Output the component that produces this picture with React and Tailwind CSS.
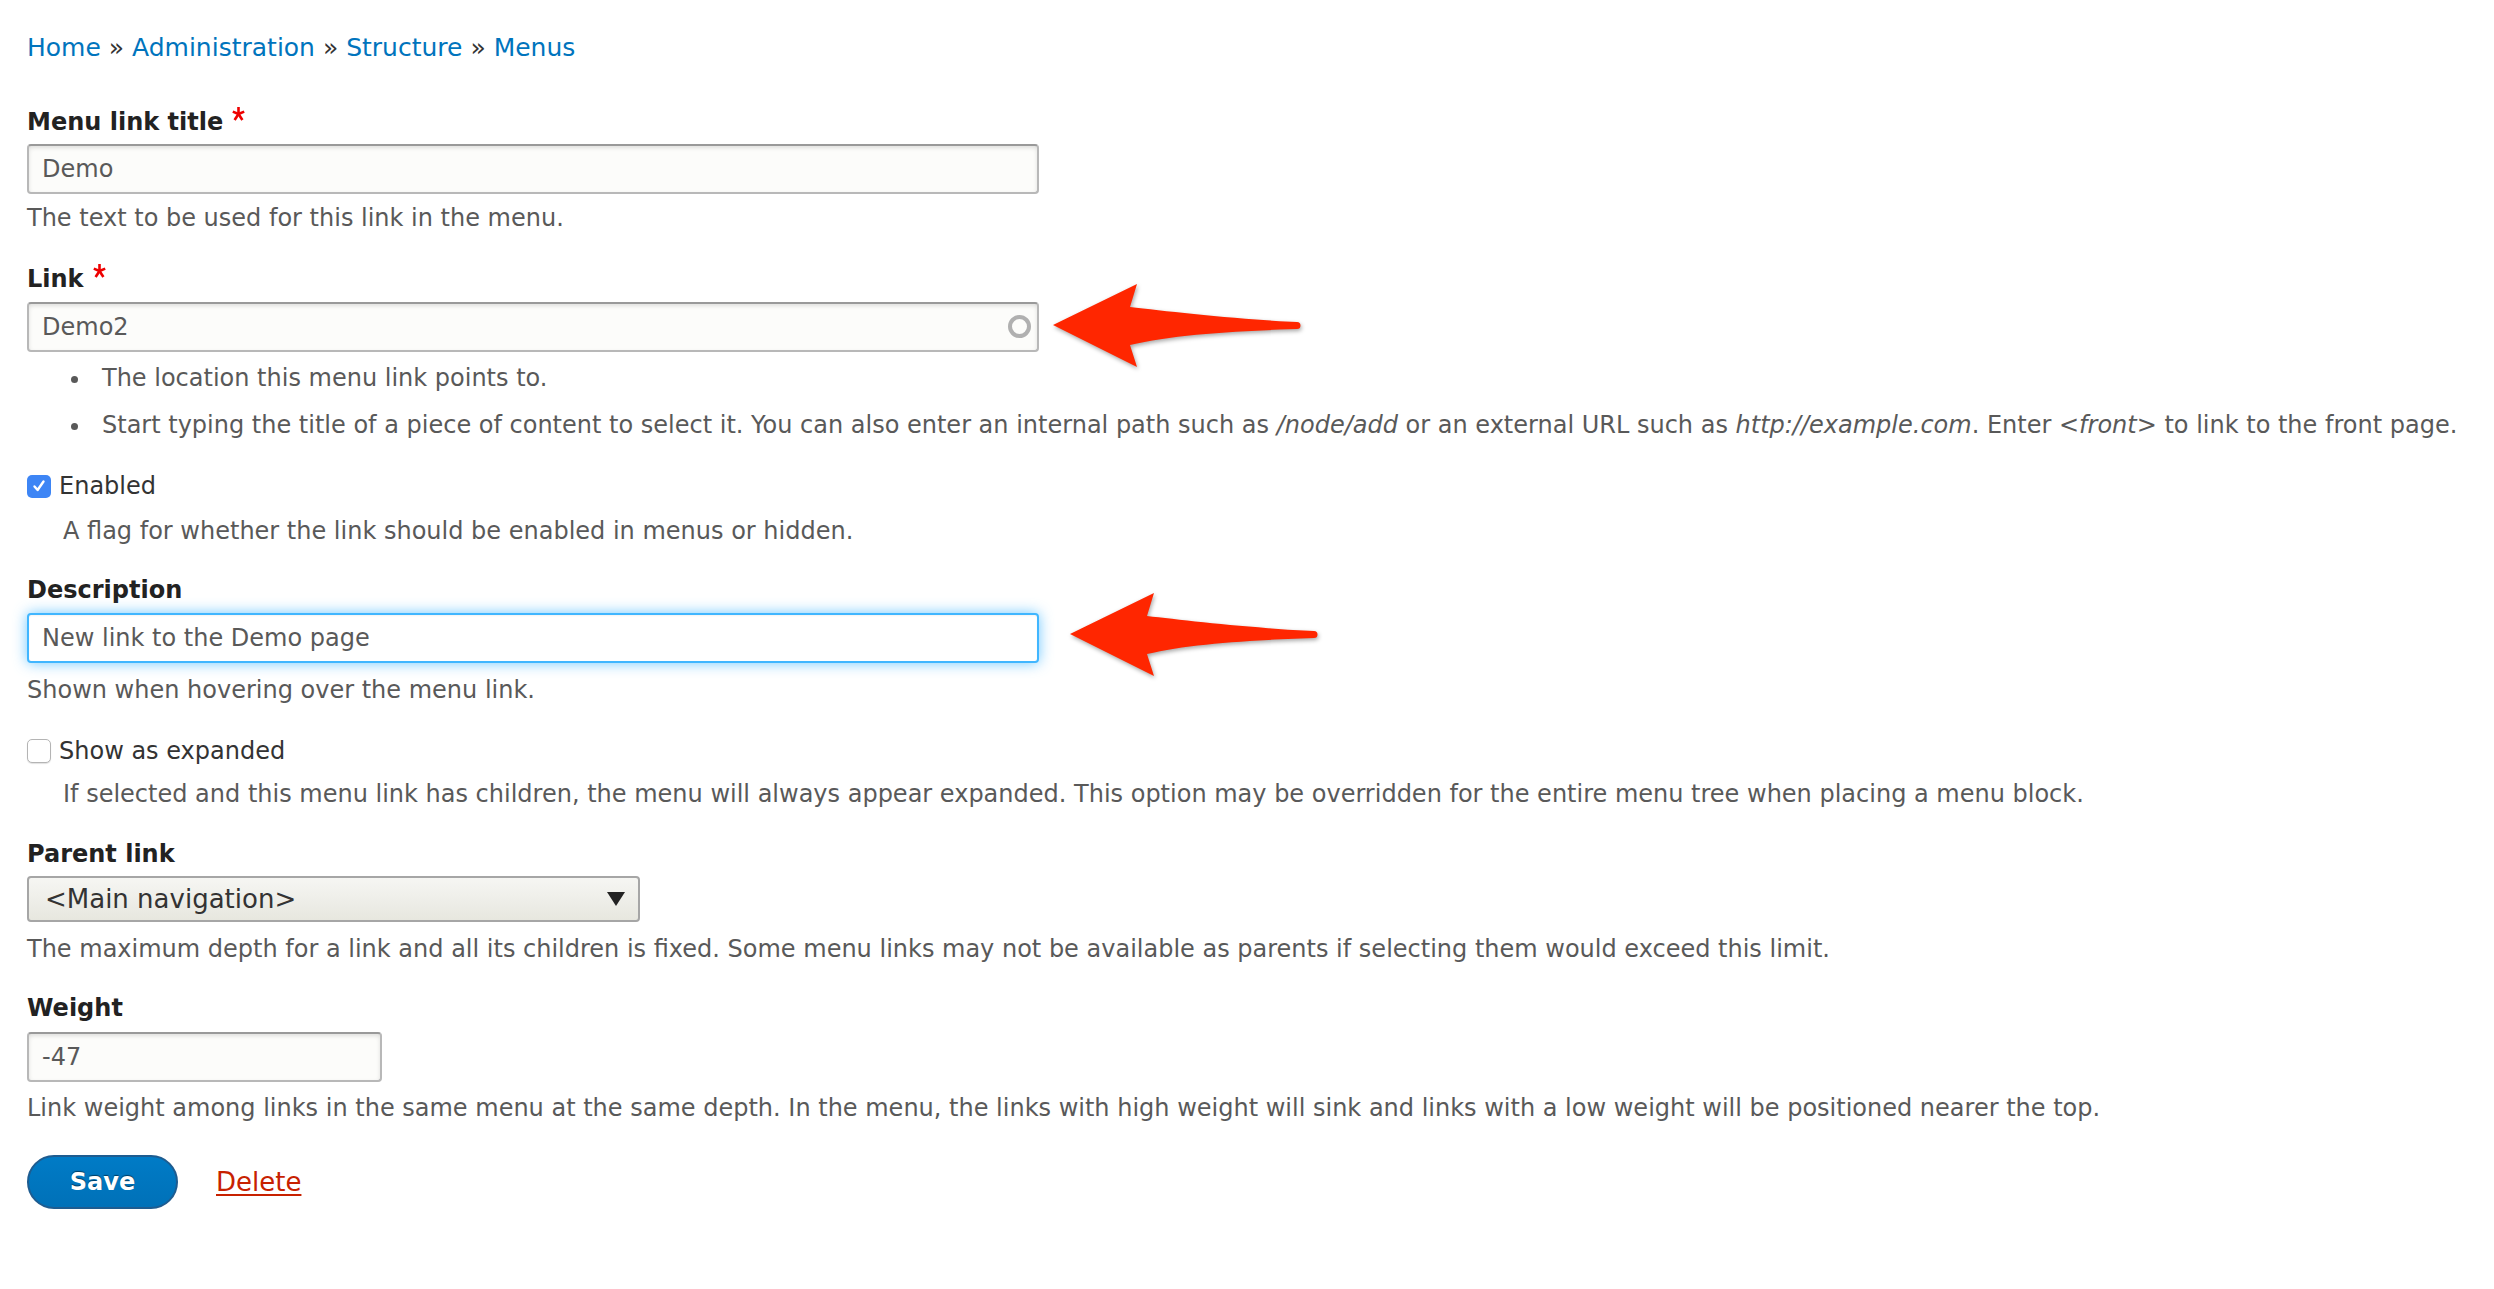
import React from 'react'

const inputBase =
  'h-[50px] w-full rounded-[4px] border-2 border-[#b8b8b8] border-t-[#999] bg-[#fcfcfa] px-[13px] text-[24px] text-[#595959] shadow-[inset_0_2px_4px_rgba(0,0,0,0.12)] outline-none'

function Required() {
  return (
    <svg className="ml-[9px] mt-[1px] h-[14px] w-[13px]" viewBox="0 0 13 14">
      <g stroke="#e00" strokeWidth="2.6" strokeLinecap="butt">
        <line x1="6.5" y1="0" x2="6.5" y2="7.5" />
        <line x1="6.5" y1="7" x2="0.8" y2="4.6" />
        <line x1="6.5" y1="7" x2="12.2" y2="4.6" />
        <line x1="6.5" y1="7" x2="2.6" y2="13" />
        <line x1="6.5" y1="7" x2="10.4" y2="13" />
      </g>
    </svg>
  )
}

function Label({ children, required, className = '' }) {
  return (
    <div className={`flex items-start leading-[32px] text-[24px] font-bold text-[#222] ${className}`}>
      <span>{children}</span>
      {required && <Required />}
    </div>
  )
}

function Desc({ children, className = '' }) {
  return <div className={`text-[24px] leading-[30px] text-[#595959] ${className}`}>{children}</div>
}

function Checkbox({ checked, label, className = '' }) {
  return (
    <div className={`flex items-center gap-[8px] leading-[32px] text-[24px] text-[#333] ${className}`}>
      {checked ? (
        <span className="flex h-[23px] w-[24px] items-center justify-center rounded-[5px] bg-[#3d85f5]">
          <svg className="h-[14px] w-[14px]" viewBox="0 0 14 14" fill="none">
            <path d="M2.5 7.5 L5.6 11 L11.5 2.5" stroke="#fff" strokeWidth="2.4" strokeLinecap="round" strokeLinejoin="round" />
          </svg>
        </span>
      ) : (
        <span className="h-[24px] w-[24px] rounded-[5px] border-[1.5px] border-[#b4b4b4] bg-white shadow-[0_1px_1px_rgba(0,0,0,0.12)]" />
      )}
      <span>{label}</span>
    </div>
  )
}

function Arrow({ className }) {
  return (
    <svg className={`absolute drop-shadow-[1px_2px_2px_rgba(0,0,0,0.35)] ${className}`} width="252" height="86" viewBox="0 0 252 86">
      <path
        d="M0 41 L84 0 L77 23 C112 27 180 35 244 38 A3.5 3.5 0 0 1 244 45 C180 47 118 51 77 61 L84 83 Z"
        fill="#ff2600"
      />
    </svg>
  )
}

export default function App() {
  return (
    <div className="relative min-h-screen bg-white pl-[27px] pt-[30px] font-['DejaVu_Sans',sans-serif]">
      <nav className="text-[25px] leading-[36px] text-[#333]">
        <a className="text-[#0074bd]">Home</a> » <a className="text-[#0074bd]">Administration</a> »{' '}
        <a className="text-[#0074bd]">Structure</a> » <a className="text-[#0074bd]">Menus</a>
      </nav>

      <Label required className="mt-[40px]">Menu link title</Label>
      <div className="mt-[6px] w-[1012px]">
        <input readOnly value="Demo" className={inputBase} />
      </div>
      <Desc className="mt-[9px]">The text to be used for this link in the menu.</Desc>

      <Label required className="mt-[30px]">Link</Label>
      <div className="relative mt-[7px] w-[1012px]">
        <input readOnly value="Demo2" className={inputBase} />
        <span className="absolute right-[8px] top-[13px] h-[23px] w-[23px] rounded-full border-[4px] border-[#b0b0b0] blur-[0.4px]" />
      </div>
      <ul className="mt-[11px] text-[24px] leading-[30px] text-[#595959]">
        <li className="flex items-center pl-[44px]">
          <span className="mt-[3px] mr-[24px] h-[7px] w-[7px] shrink-0 rounded-full bg-[#595959]" />
          The location this menu link points to.
        </li>
        <li className="mt-[17px] flex items-center whitespace-nowrap pl-[44px]">
          <span className="mt-[3px] mr-[24px] h-[7px] w-[7px] shrink-0 rounded-full bg-[#595959]" />
          <span>
            Start typing the title of a piece of content to select it. You can also enter an internal path such as{' '}
            <em>/node/add</em> or an external URL such as <em>http://example.com</em>. Enter <em>&lt;front&gt;</em> to
            link to the front page.
          </span>
        </li>
      </ul>

      <Checkbox checked label="Enabled" className="mt-[30px]" />
      <Desc className="mt-[14px] pl-[36px]">A flag for whether the link should be enabled in menus or hidden.</Desc>

      <Label className="mt-[28px]">Description</Label>
      <div className="mt-[7px] w-[1012px]">
        <input
          readOnly
          value="New link to the Demo page"
          className="h-[50px] w-full rounded-[4px] border-2 border-[#40b6ff] bg-white px-[13px] text-[24px] text-[#595959] shadow-[inset_0_1px_2px_rgba(0,0,0,0.05),0_0_14px_rgba(64,182,255,0.75)] outline-none"
        />
      </div>
      <Desc className="mt-[12px]">Shown when hovering over the menu link.</Desc>

      <Checkbox label="Show as expanded" className="mt-[30px]" />
      <Desc className="mt-[12px] pl-[36px]">
        If selected and this menu link has children, the menu will always appear expanded. This option may be
        overridden for the entire menu tree when placing a menu block.
      </Desc>

      <Label className="mt-[29px]">Parent link</Label>
      <div className="mt-[6px] flex h-[46px] w-[613px] items-center justify-between rounded-[4px] border-2 border-[#a6a6a6] bg-gradient-to-b from-[#f6f6f3] to-[#e7e7df] pl-[16px] pr-[13px] text-[26px] text-[#333]">
        <span>&lt;Main navigation&gt;</span>
        <svg className="h-[14px] w-[18px]" viewBox="0 0 18 14">
          <path d="M0 0 H18 L9 14 Z" fill="#222" />
        </svg>
      </div>
      <Desc className="mt-[12px]">
        The maximum depth for a link and all its children is fixed. Some menu links may not be available as parents if
        selecting them would exceed this limit.
      </Desc>

      <Label className="mt-[28px]">Weight</Label>
      <div className="mt-[8px] w-[355px]">
        <input readOnly value="-47" className={`${inputBase} h-[48px]`} />
      </div>
      <Desc className="mt-[11px]">
        Link weight among links in the same menu at the same depth. In the menu, the links with high weight will sink
        and links with a low weight will be positioned nearer the top.
      </Desc>

      <div className="mt-[32px] flex items-center gap-[38px] pb-[40px]">
        <button className="h-[54px] w-[151px] rounded-full border-2 border-[#1e5c90] bg-gradient-to-b from-[#007bc6] to-[#0071b8] text-[24px] font-bold text-white [text-shadow:0_-1px_1px_rgba(0,0,0,0.5)]">
          Save
        </button>
        <a className="text-[26px] text-[#c72100] underline decoration-2 underline-offset-[3px]">Delete</a>
      </div>

      <Arrow className="left-[1053px] top-[284px]" />
      <Arrow className="left-[1070px] top-[593px]" />
    </div>
  )
}
